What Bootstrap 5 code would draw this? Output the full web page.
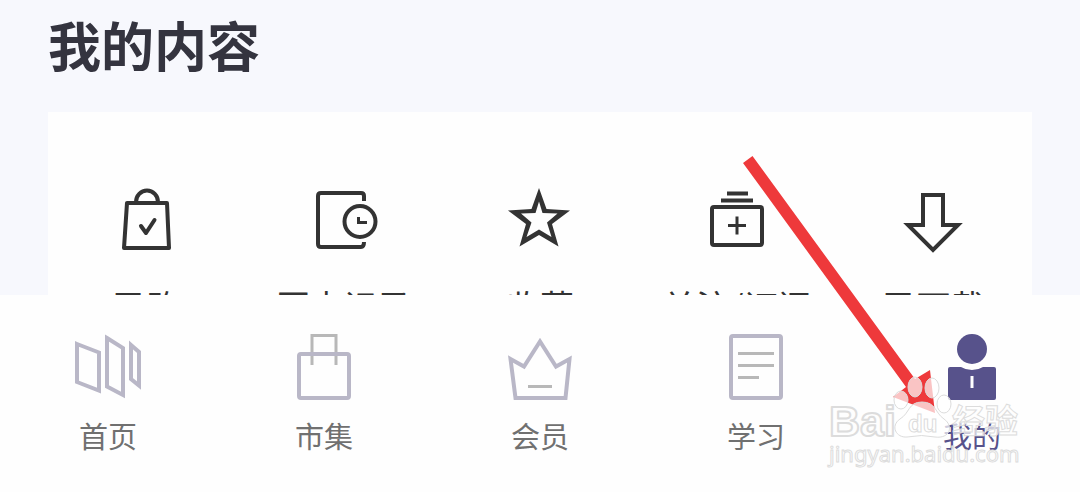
<!DOCTYPE html>
<html lang="zh-CN">
<head>
<meta charset="utf-8">
<meta name="viewport" content="width=device-width, initial-scale=1">
<title>我的</title>
<link href="https://cdn.jsdelivr.net/npm/bootstrap@5.3.0/dist/css/bootstrap.min.css" rel="stylesheet">
<style>
  body { background: #f7f8fd; font-family: "Noto Sans CJK SC", sans-serif; }
  .content-area { min-height: 0; padding: 4px 48px 0; }
  .page-title { font-size: 53px; line-height: 80px; font-weight: 700; color: #34343f; margin-bottom: 28px; }
  .panel { background: #fefefe; padding: 72px 0 48px; }
  .icon { width: 72px; height: 72px; fill: none; stroke-width: 4; display: block; }
  .entry { color: #333; font-size: 34px; line-height: 50px; }
  .entry .icon { stroke: #333; stroke-width: 5; margin-bottom: 25px; }
  .tabs { background: #fefefe; padding: 37px 0 35px; }
  .tab { color: #707070; font-size: 29px; line-height: 44px; }
  .tab .icon { stroke: #b9b7c7; margin-bottom: 9px; }
  .tab .thin { stroke: #b8b8b8; stroke-width: 3; }
  .tab.active { color: #57528b; }
  .overlay { pointer-events: none; }
  .wm { fill: #fff; fill-opacity: .7; stroke: #dcdcdc; stroke-width: 1; }
  .wm .heavy { stroke-width: 2; stroke-linejoin: round; }
</style>
</head>
<body>
<div class="vh-100 d-flex flex-column position-relative overflow-hidden">
  <main class="content-area flex-grow-1 overflow-hidden">
    <h1 class="page-title">我的内容</h1>
    <div class="panel d-flex">
      <a href="#" class="entry col d-flex flex-column align-items-center text-decoration-none text-nowrap">
        <svg class="icon" viewBox="0 0 72 72" stroke-linejoin="round"><path stroke-width="4" d="M17 19H57L59 64H14ZM26 18a11 11.500 0 0 1 22 0"/><path stroke-width="4" d="M31 42L36 49L44.500 36" stroke-linecap="round"/></svg>
        <span>已购</span></a>
      <a href="#" class="entry col d-flex flex-column align-items-center text-decoration-none text-nowrap">
        <svg class="icon" viewBox="0 0 72 72"><path stroke-width="4" d="M57 17V12q0-3-3-3H14q-3 0-3 3V60q0 3 3 3H54q3 0 3-5"/><circle cx="53" cy="37.500" r="15.500" stroke-width="4"/><path d="M51.500 33V38.500H60" stroke-width="3"/></svg>
        <span>历史记录</span></a>
      <a href="#" class="entry col d-flex flex-column align-items-center text-decoration-none text-nowrap">
        <svg class="icon" viewBox="0 0 72 72"><path fill="#333" fill-rule="evenodd" stroke="none" d="M35 4L42.500 25L66 26.500L48 40L54.500 62.500L35 51L15.500 62.500L22 40L4 26.500L27.500 25ZM35 17.500L31.500 29L17 29.500L27.500 38.500L22.500 53L35 45.500L47.500 53L43 38.500L53.500 29.500L38.500 29Z"/></svg>
        <span>收藏</span></a>
      <a href="#" class="entry col d-flex flex-column align-items-center text-decoration-none text-nowrap">
        <svg class="icon" viewBox="0 0 72 72"><rect x="11" y="23" width="50" height="38" rx="2" stroke-width="4"/><path stroke-width="4" d="M20 16.500H52M26 9.500H47"/><path d="M27 41.500H45M36 32.500V50.500" stroke-width="3"/></svg>
        <span>关注/订阅</span></a>
      <a href="#" class="entry col d-flex flex-column align-items-center text-decoration-none text-nowrap">
        <svg class="icon" viewBox="0 0 72 72"><path stroke-width="4" d="M25 11H45V41H60L35 66L10 41H25Z"/></svg>
        <span>已下载</span></a>
    </div>
  </main>
  <nav class="tabs d-flex">
    <a href="#" class="tab col d-flex flex-column align-items-center text-decoration-none">
      <svg class="icon" viewBox="0 0 72 72"><path d="M5 12L27 20.500V58.500L5 50ZM35 6L51 16V63L35 54.500ZM59 13L67 20V53.500L59 47Z"/></svg>
      <span>首页</span></a>
    <a href="#" class="tab col d-flex flex-column align-items-center text-decoration-none">
      <svg class="icon" viewBox="0 0 72 72"><path class="thin" d="M24 33V3.500H48V33"/><rect x="11" y="22" width="50" height="44" rx="2"/></svg>
      <span>市集</span></a>
    <a href="#" class="tab col d-flex flex-column align-items-center text-decoration-none">
      <svg class="icon" viewBox="0 0 72 72"><path d="M6.500 27L20 34.500L36 9.500L52 34.500L65.500 27L61.500 66H11.500Z"/><path class="thin" d="M24 54.500H48"/></svg>
      <span>会员</span></a>
    <a href="#" class="tab col d-flex flex-column align-items-center text-decoration-none">
      <svg class="icon" viewBox="0 0 72 72"><rect x="11" y="4" width="50" height="62" rx="2"/><path class="thin" d="M18 21.500H54M18 33.500H54M18 45.500H39"/></svg>
      <span>学习</span></a>
    <a href="#" class="tab active col d-flex flex-column align-items-center text-decoration-none" aria-current="page">
      <svg class="icon" viewBox="0 0 72 72"><g stroke="none" fill="#57528b"><path d="M14 35H25A21 21 0 0 0 47 35H58q2 0 2 2V66q0 2-2 2H14q-2 0-2-2V37q0-2 2-2Z"/><circle cx="36" cy="17" r="15"/><path fill="#fff" d="M34.500 44h3v12h-3z"/></g></svg>
      <span>我的</span></a>
  </nav>
  <svg class="overlay position-absolute top-0 start-0 w-100 h-100" viewBox="0 0 1080 492" aria-hidden="true">
    <path fill="#ee393b" d="M743 163L752.500 156L915 379L930 370L935 413L893 397L906 387Z"/>
    <g class="wm">
      <text class="heavy" x="829" y="436" font-family="Liberation Sans" font-weight="700" font-size="43">Bai</text>
      <ellipse cx="901" cy="400" rx="7" ry="9"/><ellipse cx="915" cy="387" rx="7" ry="10"/><ellipse cx="932" cy="388" rx="7" ry="10"/><ellipse cx="944" cy="404" rx="7" ry="9"/>
      <path d="M922 402C908 402 910 413 900 419C890 426 896 438 907 437Q922 434 935 437C950 439 954 426 944 419C935 413 936 402 922 402Z"/>
      <text x="908" y="432" font-family="Liberation Sans" font-weight="700" font-size="24">du</text>
      <text x="952" y="433" font-family="Noto Sans CJK SC" font-weight="700" font-size="33">经验</text>
      <text x="829" y="462" font-family="Noto Sans" font-size="22">jingyan.baidu.com</text>
    </g>
  </svg>
</div>
<script src="https://cdn.jsdelivr.net/npm/bootstrap@5.3.0/dist/js/bootstrap.bundle.min.js"></script>
</body>
</html>
